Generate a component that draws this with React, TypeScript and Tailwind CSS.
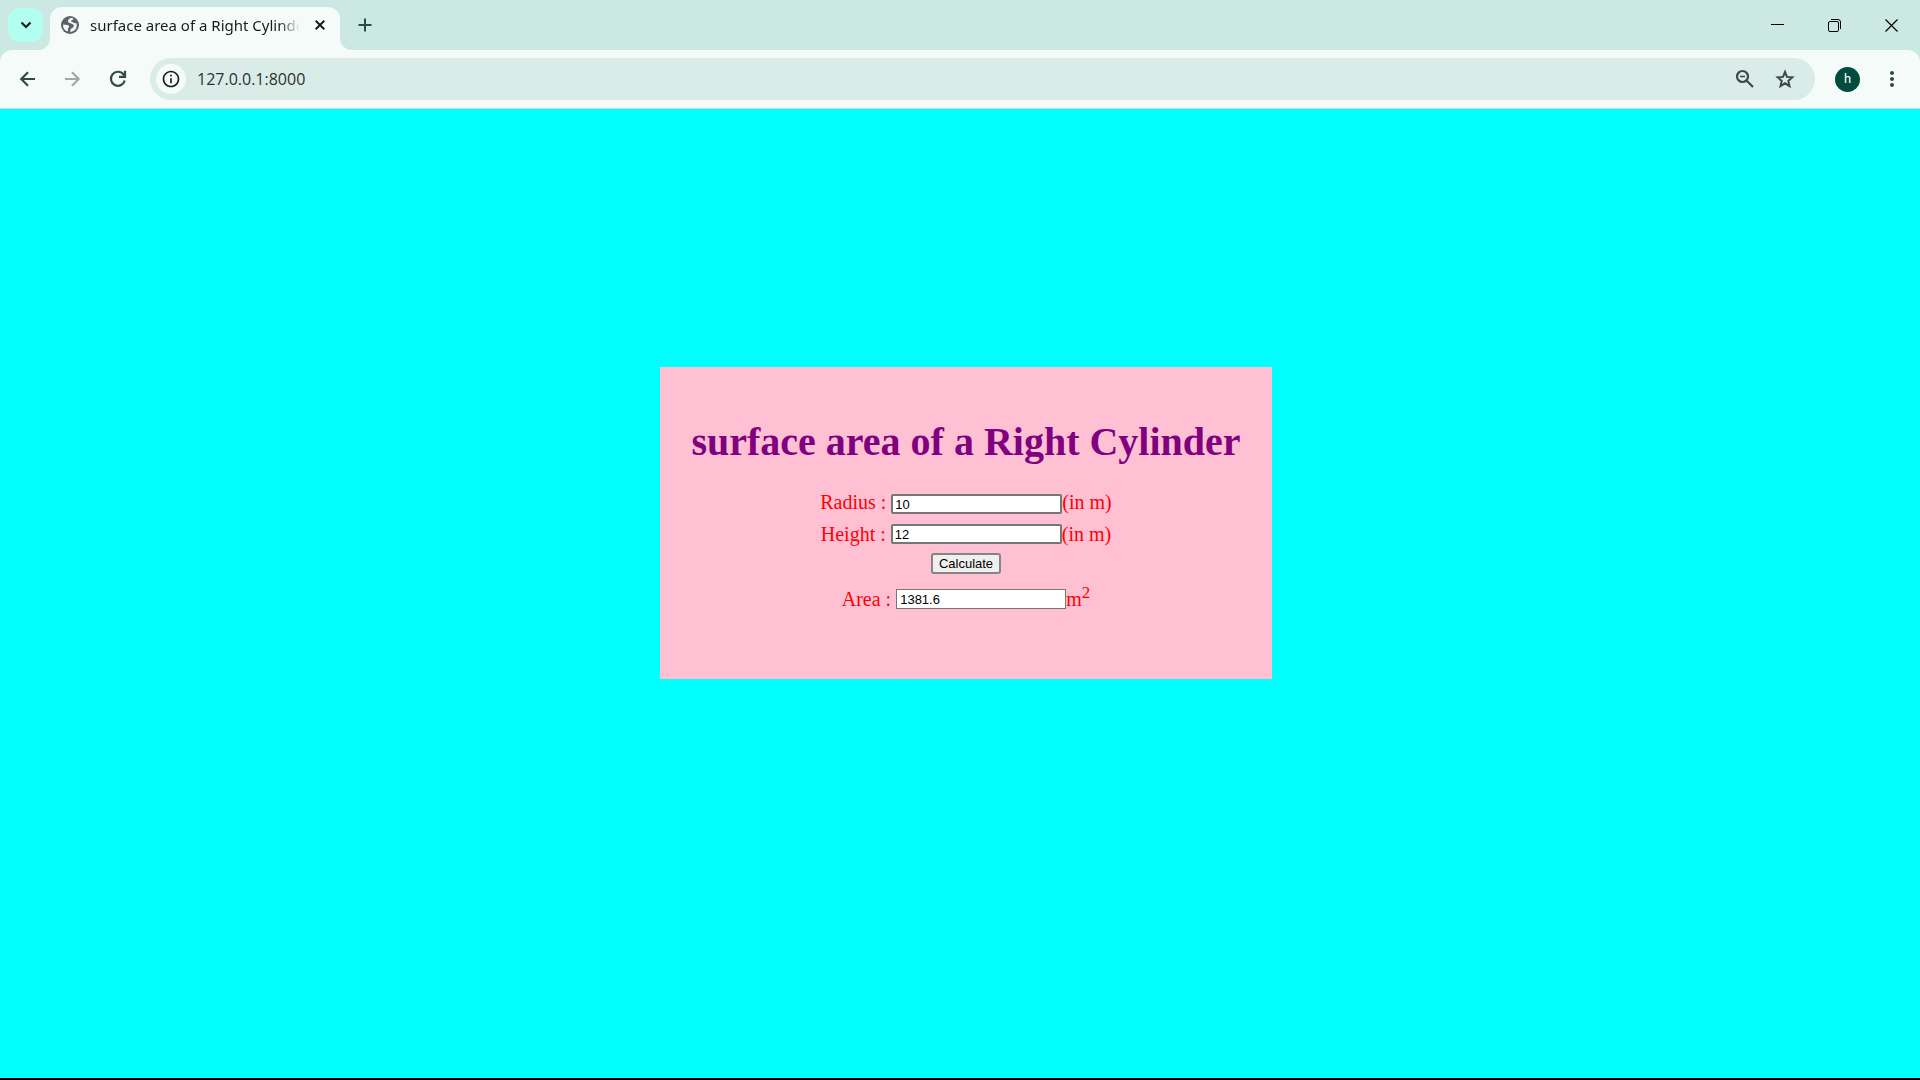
import React, { useState } from "react";
import { MdInfoOutline, MdMoreVert } from "react-icons/md";

function GlobeIcon() {
  return (
    <svg className="size-[18px] shrink-0" viewBox="0 0 18 18" aria-hidden="true">
      <circle cx="9" cy="9" r="9" fill="#5f6368" />
      <path
        d="M9.2 2C7.6 3.2 6.6 4.4 7 5.6c.4 1.2 1.8 1.6 3.2 2 1.6.4 2.8 1.2 2.6 2.6-.2 1.2-1.4 1.6-2.4 2.2-1 .6-1 1.6-1.2 3.4 3.6 0 6.6-3 6.6-6.6 0-.8-.1-1.5-.4-2.2-1.2.6-2.4.4-3-.4-.6-.8-1.6-.6-2.2-1.2-.4-.6.2-1.2 1.2-1.4.8-.2 1-1 .8-1.6C11.3 2.1 10.2 2 9.2 2Z"
        fill="#f4fbf8"
      />
      <path
        d="M2.1 8.4c1.4.2 2.7.2 4.1.5 1.4.3 2 1 1.9 1.9-.1.9-1 1-1.2 1.900-.1.8.2 1.600 0 2.800A6.900 6.900 0 0 1 2.100 8.400Z"
        fill="#f4fbf8"
      />
    </svg>
  );
}

function TabStrip() {
  return (
    <div className="flex h-[50px] items-start bg-[#cce8e2]">
      <div className="flex h-[50px] w-[50px] shrink-0 items-start pl-2 pt-2">
        <button
          aria-label="Search tabs"
          className="flex h-[34px] w-[35px] items-center justify-center rounded-xl bg-[#b2fff2]"
        >
          <svg width="12" height="8" viewBox="0 0 12 8" fill="none" stroke="#10201d" strokeWidth="2.2">
            <path d="M1.5 1.5 6 6l4.5-4.5" />
          </svg>
        </button>
      </div>
      <div className="relative mt-[7px] flex h-[43px] w-[290px] shrink-0 items-center rounded-t-xl bg-[#f4fbf8] pb-[7px] pl-[11px] pr-[10px]">
        <svg className="absolute bottom-0 -left-3" width="12" height="12" aria-hidden="true">
          <path d="M12 0v12H0A12 12 0 0 0 12 0Z" fill="#f4fbf8" />
        </svg>
        <svg className="absolute bottom-0 -right-3" width="12" height="12" aria-hidden="true">
          <path d="M0 0v12h12A12 12 0 0 1 0 0Z" fill="#f4fbf8" />
        </svg>
        <GlobeIcon />
        <span className="ml-[11px] w-[210px] shrink-0 overflow-hidden whitespace-nowrap bg-gradient-to-r from-[#161d1b] from-90% to-transparent bg-clip-text font-['Noto_Sans',sans-serif] text-[15px] leading-5 text-transparent">
          surface area of a Right Cylinder
        </span>
        <button aria-label="Close tab" className="ml-auto flex size-5 items-center justify-center text-[#10201d]">
          <svg width="10" height="10" viewBox="0 0 10 10" stroke="currentColor" strokeWidth="2">
            <path d="M.7.7l8.6 8.6M9.3.7L.7 9.3" />
          </svg>
        </button>
      </div>
      <button aria-label="New tab" className="ml-[15px] mt-[15px] flex size-5 items-center justify-center text-[#2f4b45]">
        <svg width="14" height="14" viewBox="0 0 14 14" stroke="currentColor" strokeWidth="2">
          <path d="M7 .5v13M.5 7h13" />
        </svg>
      </button>
      <div className="ml-auto flex h-[50px] items-center text-black">
        <button aria-label="Minimize" className="flex h-12 w-[57px] items-center justify-center">
          <svg width="13" height="13" viewBox="0 0 13 13" stroke="currentColor">
            <path d="M0 5.5h13" />
          </svg>
        </button>
        <button aria-label="Restore" className="flex h-12 w-[57px] items-center justify-center">
          <svg width="13" height="13" viewBox="0 0 13 13" fill="none" stroke="currentColor">
            <rect x=".5" y="2.5" width="10" height="10" rx="1.5" />
            <path d="M3 .5h7a2.5 2.5 0 0 1 2.5 2.5v7" />
          </svg>
        </button>
        <button aria-label="Close" className="flex h-12 w-[57px] items-center justify-center">
          <svg width="13" height="13" viewBox="0 0 13 13" stroke="currentColor" strokeWidth="1.2">
            <path d="M.5.5l12 12M12.5.5l-12 12" />
          </svg>
        </button>
      </div>
    </div>
  );
}

function Toolbar() {
  return (
    <div className="bg-[#cce8e2]">
      <div className="flex h-[59px] items-center rounded-t-xl border-b border-[#c9dcd7] bg-[#f4fbf8] px-4 text-[#2f4b45]">
        <button aria-label="Back">
          <svg className="size-[22px]" viewBox="0 0 22 22" fill="none" stroke="currentColor" strokeWidth="2.2">
            <path d="M19 11H6M12 4.300 5.300 11l6.700 6.700" />
          </svg>
        </button>
        <button aria-label="Forward" disabled className="ml-6 text-[#a1a8a6]">
          <svg className="size-[22px]" viewBox="0 0 22 22" fill="none" stroke="currentColor" strokeWidth="2.2">
            <path d="M3 11h13M10 4.300l6.700 6.700-6.700 6.700" />
          </svg>
        </button>
        <button aria-label="Reload" className="ml-6">
          <svg className="size-5" viewBox="0 0 20 20" fill="none" stroke="currentColor" strokeWidth="2.2">
            <path d="M16.7 11.5A7 7 0 1 1 15.5 5.500L17 7" />
            <path d="M17 1.800v6.100h-6" />
          </svg>
        </button>
        <div className="ml-[22px] flex h-[42px] flex-1 items-center rounded-full bg-[#daece7] pl-[6px] pr-[18px]">
          <button
            aria-label="View site information"
            className="flex size-[30px] items-center justify-center rounded-full bg-[#f4fbf8] text-[#161d1b]"
          >
            <MdInfoOutline className="size-5" />
          </button>
          <input
            aria-label="Address"
            defaultValue="127.0.0.1:8000"
            className="ml-[11px] flex-1 bg-transparent font-['Open_Sans',sans-serif] text-base text-[#2a3331] outline-none"
          />
          <button aria-label="Zoom" className="text-[#3f4947]">
            <svg className="size-6" viewBox="0 0 24 24" fill="none" stroke="currentColor" strokeWidth="2.2">
              <circle cx="9.5" cy="9.5" r="5.5" />
              <path d="M13.5 13.5l6.5 6.5" />
              <path d="M7 9.5h5" strokeWidth="1.6" />
            </svg>
          </button>
          <button aria-label="Bookmark this tab" className="ml-4 text-[#3f4947]">
            <svg className="size-6" viewBox="0 0 24 24" fill="none" stroke="currentColor" strokeWidth="2">
              <path d="M12 5l2 4.900 5.300.500-4 3.500 1.200 5.200-4.500-2.800-4.500 2.800 1.200-5.200-4-3.500 5.300-.500Z" />
            </svg>
          </button>
        </div>
        <button
          aria-label="Profile"
          className="ml-5 flex size-[25px] items-center justify-center rounded-full bg-[#004d40] font-['Roboto',sans-serif] text-[13px] text-white"
        >
          h
        </button>
        <button aria-label="Menu" className="ml-5">
          <MdMoreVert className="size-6" />
        </button>
      </div>
    </div>
  );
}

const fieldClass =
  "h-5 w-[171px] rounded-[2px] border-2 border-[#767676] bg-white px-[2px] font-['Liberation_Sans',sans-serif] text-[13px] leading-4 text-black outline-none";

function Calculator() {
  const [radius, setRadius] = useState("10");
  const [height, setHeight] = useState("12");
  const [area, setArea] = useState("1381.6");

  const calculate = (e: React.FormEvent) => {
    e.preventDefault();
    const r = Number(radius);
    setArea((2 * 3.14 * r * Number(height) + 2 * 3.14 * r * r).toFixed(1));
  };

  return (
    <form
      onSubmit={calculate}
      className="flex flex-col items-center self-start border border-dashed border-[#ffc0cb] bg-[#ffc0d4] px-[30px] pb-[67px] pt-[51px] text-xl leading-6 text-[#ff0000]"
    >
      <h1 className="whitespace-nowrap text-[40px] font-bold leading-[46px] text-[#800080]">
        surface area of a Right Cylinder
      </h1>
      <div className="mt-[25px] flex items-end">
        <label htmlFor="radius">Radius :</label>
        <input id="radius" value={radius} onChange={(e) => setRadius(e.target.value)} className={`ml-[5px] ${fieldClass}`} />
        <span>(in m)</span>
      </div>
      <div className="mt-2 flex items-center">
        <label htmlFor="height">Height :</label>
        <input id="height" value={height} onChange={(e) => setHeight(e.target.value)} className={`ml-[5px] ${fieldClass}`} />
        <span>(in m)</span>
      </div>
      <button
        type="submit"
        className="mt-[7px] h-[21px] rounded-[3px] border-2 border-[#858585] bg-[#efefef] px-[6px] font-['Liberation_Sans',sans-serif] text-[13px] leading-4 text-black"
      >
        Calculate
      </button>
      <div className="mt-[13px] flex items-center">
        <label htmlFor="area">Area :</label>
        <input
          id="area"
          value={area}
          readOnly
          className="ml-[5px] h-5 w-[170px] border border-[#767676] bg-white px-[3px] font-['Liberation_Sans',sans-serif] text-[13px] leading-4 text-black outline-none"
        />
        <span>
          m<sup className="text-[17px]">2</sup>
        </span>
      </div>
    </form>
  );
}

export default function App() {
  return (
    <div className="flex min-h-screen flex-col bg-[#00ffff]">
      <TabStrip />
      <Toolbar />
      <main className="flex flex-1 justify-center border-b-2 border-black pl-3 pt-[258px] font-['Liberation_Serif',serif]">
        <Calculator />
      </main>
    </div>
  );
}
